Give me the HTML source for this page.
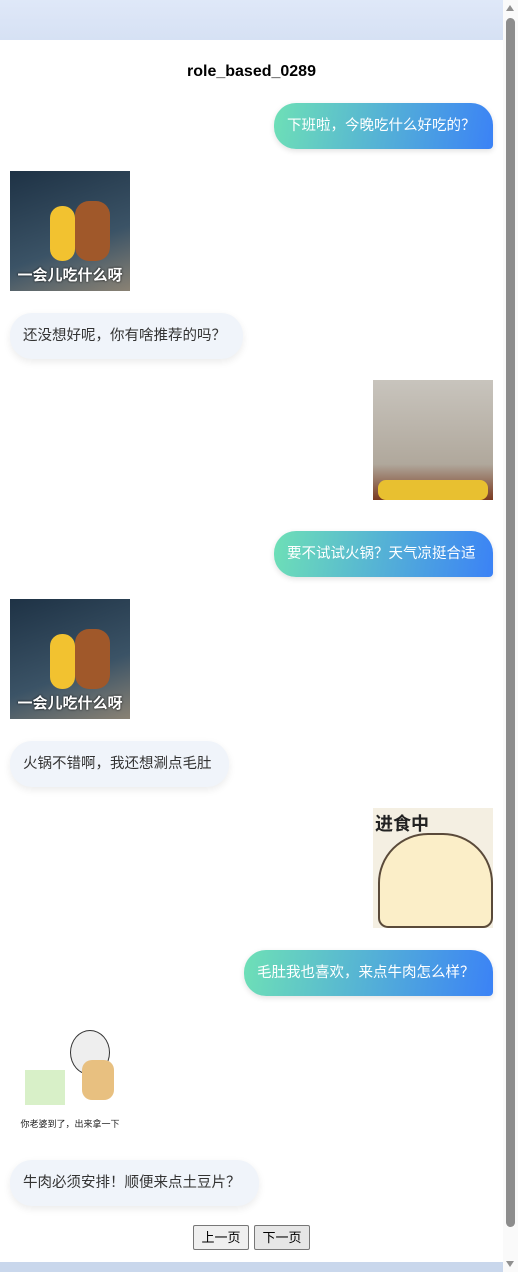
<!DOCTYPE html>
<html><head><meta charset="utf-8"><style>
*{margin:0;padding:0;box-sizing:border-box}
body{width:518px;height:1272px;overflow:hidden;background:#fff;font-family:"Liberation Sans","Noto Sans CJK SC",sans-serif;position:relative}
.top{position:absolute;left:0;top:0;width:503px;height:40px;background:linear-gradient(#dfe8f8,#d6e1f4)}
.bot{position:absolute;left:0;top:1262px;width:503px;height:10px;background:#c9d7ec}
.sb{position:absolute;left:503px;top:0;width:15px;height:1272px;background:#fafafa}
.thumb{position:absolute;left:506px;top:18px;width:9px;height:1209px;background:#8d8d8d;border-radius:5px}
.au{position:absolute;left:506px;top:5px;width:0;height:0;border-left:4.5px solid transparent;border-right:4.5px solid transparent;border-bottom:6px solid #909090}
.ad{position:absolute;left:506px;top:1261px;width:0;height:0;border-left:4.5px solid transparent;border-right:4.5px solid transparent;border-top:6px solid #909090}
h1{position:absolute;left:0;width:503px;top:63px;text-align:center;font-size:16px;font-weight:bold;color:#000}
.u,.b{position:absolute;height:46px;line-height:46px;font-size:14.5px;padding:0 13px;white-space:nowrap}
.u{color:#fff;background:linear-gradient(100deg,#6ee0b6,#3b82f6);border-radius:22px 22px 4px 22px;box-shadow:0 2px 6px rgba(0,0,0,.12)}
.b{color:#333;background:#f0f4fa;border-radius:22px;box-shadow:0 3px 8px rgba(0,0,0,.08)}
.img{position:absolute;width:120px;height:120px;overflow:hidden}
.btn{position:absolute;top:1225px;height:25px;border:1px solid #777;border-radius:2px;background:#efefef;font-size:13px;line-height:23px;text-align:center}
</style></head><body>
<div class="top"></div>
<h1>role_based_0289</h1>
<div class="u" style="left:274px;top:103px;width:219px">下班啦，今晚吃什么好吃的？</div>
<div class="img" style="left:10px;top:171px;background:linear-gradient(160deg,#1e3245,#3b5366 60%,#8a8274)"><div style="position:absolute;left:40px;top:35px;width:25px;height:55px;background:#f2c230;border-radius:12px"></div><div style="position:absolute;left:65px;top:30px;width:35px;height:60px;background:#a0582a;border-radius:14px"></div><div style="position:absolute;left:0;bottom:6px;width:120px;text-align:center;color:#fff;font-size:15px;font-weight:bold;text-shadow:0 0 2px #000">一会儿吃什么呀</div></div>
<div class="b" style="left:10px;top:313px;width:233px">还没想好呢，你有啥推荐的吗？</div>
<div class="img" style="left:373px;top:380px;background:linear-gradient(#c8c4bd,#b0a89c 70%,#7a3a20)"><div style="position:absolute;left:5px;top:100px;width:110px;height:20px;background:#e8c030;border-radius:8px"></div></div>
<div class="u" style="left:274px;top:531px;width:219px">要不试试火锅？天气凉挺合适</div>
<div class="img" style="left:10px;top:599px;background:linear-gradient(160deg,#1e3245,#3b5366 60%,#8a8274)"><div style="position:absolute;left:40px;top:35px;width:25px;height:55px;background:#f2c230;border-radius:12px"></div><div style="position:absolute;left:65px;top:30px;width:35px;height:60px;background:#a0582a;border-radius:14px"></div><div style="position:absolute;left:0;bottom:6px;width:120px;text-align:center;color:#fff;font-size:15px;font-weight:bold;text-shadow:0 0 2px #000">一会儿吃什么呀</div></div>
<div class="b" style="left:10px;top:741px;width:219px">火锅不错啊，我还想涮点毛肚</div>
<div class="img" style="left:373px;top:808px;background:#f4efe2"><div style="position:absolute;left:5px;top:25px;width:115px;height:95px;background:#fbeec8;border-radius:50px 50px 10px 10px;border:2px solid #5a4a3a"></div><div style="position:absolute;left:2px;top:2px;font-size:18px;font-weight:bold;color:#222">进食中</div></div>
<div class="u" style="left:244px;top:950px;width:249px">毛肚我也喜欢，来点牛肉怎么样？</div>
<div class="img" style="left:10px;top:1015px;background:#fff"><div style="position:absolute;left:60px;top:15px;width:40px;height:45px;background:#eee;border:1px solid #333;border-radius:50%"></div><div style="position:absolute;left:72px;top:45px;width:32px;height:40px;background:#e8c080;border-radius:10px"></div><div style="position:absolute;left:15px;top:55px;width:40px;height:35px;background:#d8f0c8"></div><div style="position:absolute;left:0;top:102px;width:120px;text-align:center;font-size:9px;color:#222">你老婆到了，出来拿一下</div></div>
<div class="b" style="left:10px;top:1160px;width:249px">牛肉必须安排！顺便来点土豆片？</div>
<div class="btn" style="left:193px;width:56px">上一页</div>
<div class="btn" style="left:254px;width:56px;background:#e6e6e6">下一页</div>
<div class="bot"></div>
<div class="sb"></div><div class="thumb"></div><div class="au"></div><div class="ad"></div>
</body></html>
